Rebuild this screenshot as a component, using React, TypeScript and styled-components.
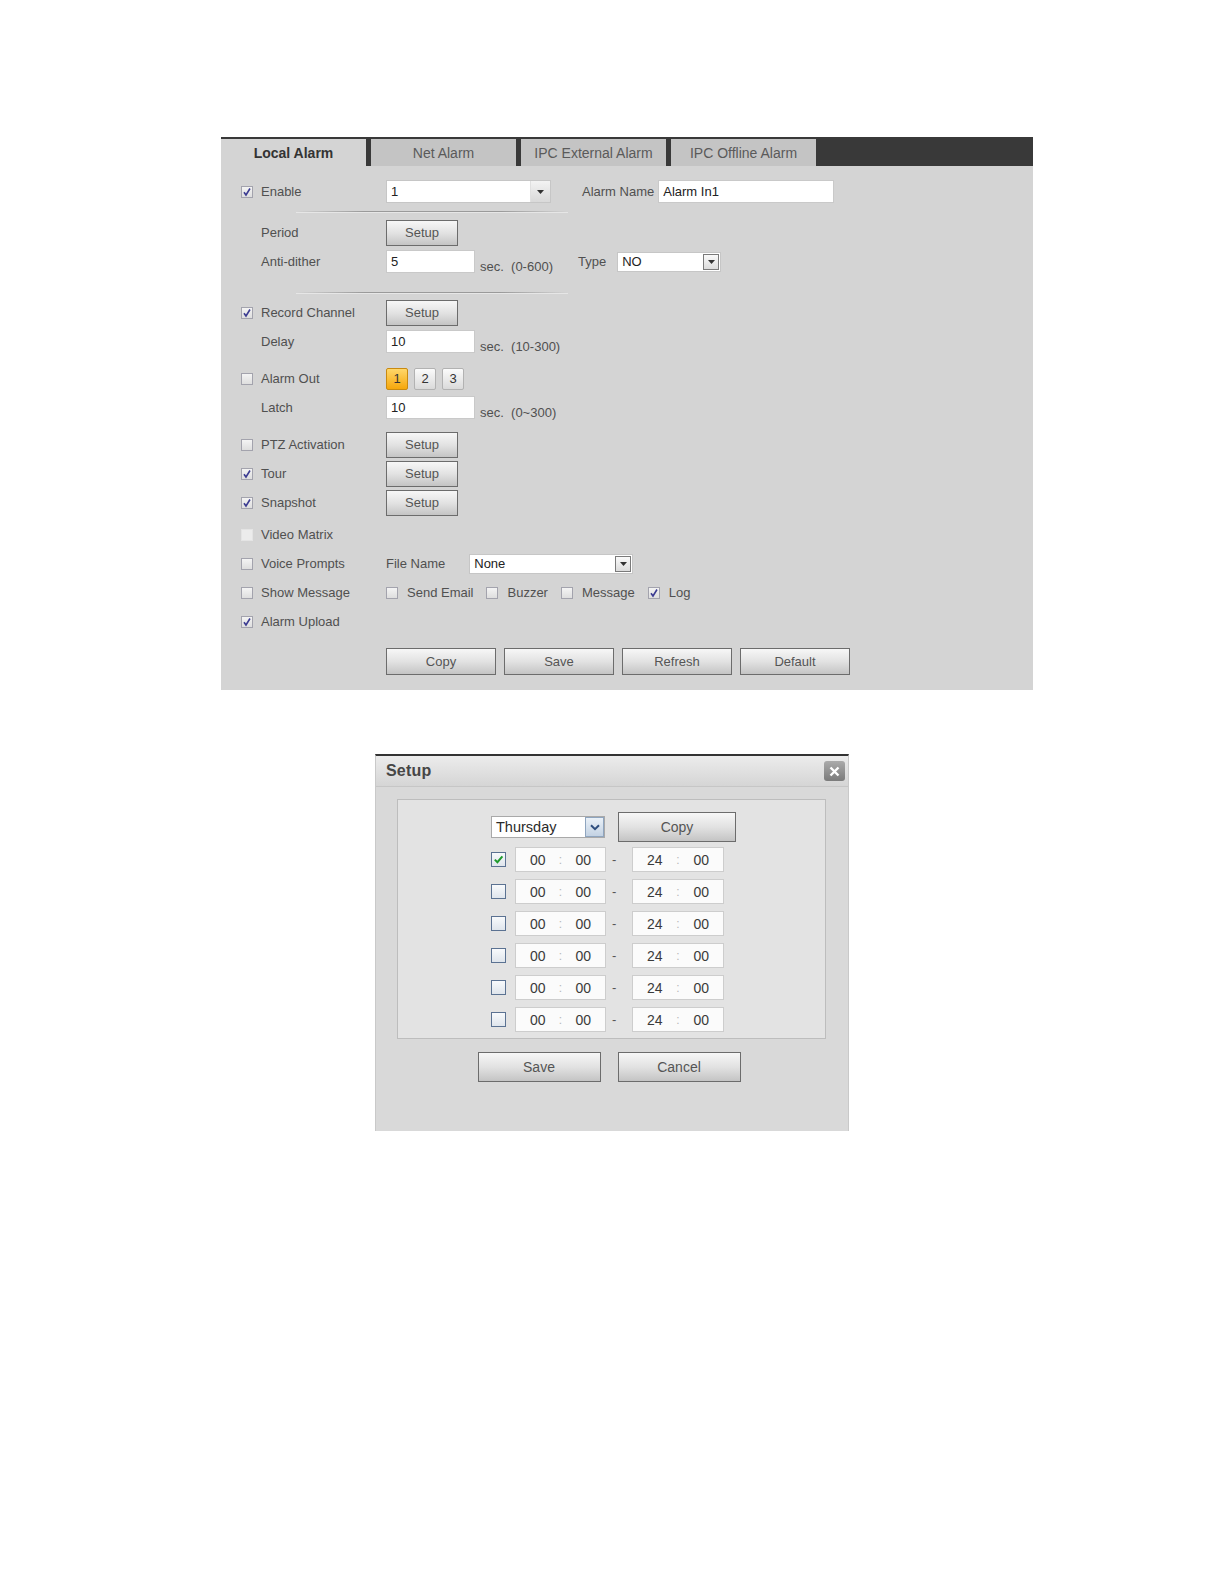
import React from "react";
import styled, { createGlobalStyle } from "styled-components";

const GlobalStyle = createGlobalStyle`
  html, body { margin: 0; padding: 0; background: #ffffff; }
  body { font-family: "Liberation Sans", Arial, sans-serif; }
  *, *::before, *::after { box-sizing: border-box; }
`;

const Page = styled.div`
  width: 1224px;
  min-height: 1584px;
  padding-top: 137px;
  background: #ffffff;
`;

/* ---------- main panel ---------- */

const Panel = styled.section`
  margin-left: 221px;
  width: 812px;
  background: #d4d4d4;
  padding-bottom: 15px;
`;

const TabBar = styled.div`
  display: flex;
  gap: 5px;
  height: 29px;
  padding-top: 2px;
  background: #393939;
`;

const Tab = styled.div<{ $active?: boolean }>`
  width: 145px;
  height: 27px;
  display: flex;
  align-items: center;
  justify-content: center;
  font-size: 14px;
  background: ${(p) => (p.$active ? "#d4d4d4" : "#c4c4c4")};
  color: ${(p) => (p.$active ? "#333333" : "#5a5a5a")};
  font-weight: ${(p) => (p.$active ? 700 : 400)};
`;

const Form = styled.div`
  display: flex;
  flex-direction: column;
  padding: 11px 0 0 20px;
`;

const Row = styled.div<{ $mt?: number }>`
  display: flex;
  align-items: center;
  height: 29px;
  margin-top: ${(p) => p.$mt ?? 0}px;
`;

const LabelCell = styled.div<{ $indent?: boolean }>`
  width: 145px;
  flex: none;
  display: flex;
  align-items: center;
  gap: 8px;
  padding-left: ${(p) => (p.$indent ? 20 : 0)}px;
  font-size: 13px;
  color: #505050;
  white-space: nowrap;
`;

const Text = styled.span<{ $ml?: number }>`
  font-size: 13px;
  color: #505050;
  white-space: nowrap;
  margin-left: ${(p) => p.$ml ?? 0}px;
`;

const Unit = styled.span`
  font-size: 13px;
  color: #505050;
  white-space: pre;
  margin-left: 5px;
  margin-top: 9px;
`;

const Divider = styled.div<{ $top: number; $bottom: number }>`
  margin: ${(p) => p.$top}px 0 ${(p) => p.$bottom}px 55px;
  width: 272px;
  height: 1px;
  background: linear-gradient(to right, rgba(150,150,150,0), #9a9a9a 25%, #9a9a9a 75%, rgba(150,150,150,0));
  box-shadow: 0 1px 0 #e6e6e6;
`;

const Box = styled.span<{ $disabled?: boolean }>`
  width: 12px;
  height: 12px;
  flex: none;
  display: inline-flex;
  align-items: center;
  justify-content: center;
  border: 1px solid ${(p) => (p.$disabled ? "#e4e4e4" : "#a3a3ad")};
  background: ${(p) =>
    p.$disabled ? "#ececec" : "linear-gradient(#f4f4f4, #dedede)"};
`;

const Check = ({ checked, disabled }: { checked?: boolean; disabled?: boolean }) => (
  <Box $disabled={disabled}>
    {checked && (
      <svg width="10" height="10" viewBox="0 0 10 10">
        <path d="M2 5.2 L4 8 L8 1.5" stroke="#3c3c92" strokeWidth="1.6" fill="none" />
      </svg>
    )}
  </Box>
);

const TextInput = styled.input<{ $w: number; $ml?: number }>`
  width: ${(p) => p.$w}px;
  height: 23px;
  margin: 0 0 0 ${(p) => p.$ml ?? 0}px;
  padding: 0 4px;
  border: 1px solid #c9c9c9;
  background: #ffffff;
  font-family: "Liberation Sans", Arial, sans-serif;
  font-size: 13px;
  color: #222222;
  outline: none;
`;

const SelectBox = styled.div<{ $w: number; $h: number; $ml?: number }>`
  width: ${(p) => p.$w}px;
  height: ${(p) => p.$h}px;
  margin-left: ${(p) => p.$ml ?? 0}px;
  display: flex;
  align-items: stretch;
  border: 1px solid #c6c6c6;
  background: #ffffff;
  font-size: 13px;
  color: #222222;
`;

const SelectValue = styled.span`
  flex: 1;
  display: flex;
  align-items: center;
  padding-left: 4px;
`;

const FlatArrow = styled.span`
  width: 20px;
  display: flex;
  align-items: center;
  justify-content: center;
  border-left: 1px solid #e0e0e0;
  background: linear-gradient(#f3f3f3, #d9d9d9);
`;

const BoxArrow = styled.span`
  width: 16px;
  margin: 1px;
  display: flex;
  align-items: center;
  justify-content: center;
  border: 1px solid #7a7a7a;
  background: linear-gradient(#fafafa, #dcdcdc);
`;

const Tri = () => (
  <svg width="7" height="4" viewBox="0 0 7 4">
    <polygon points="0,0 7,0 3.5,4" fill="#333" />
  </svg>
);

const GrayButton = styled.button<{ $w: number; $h: number; $fs?: number }>`
  width: ${(p) => p.$w}px;
  height: ${(p) => p.$h}px;
  padding: 0;
  border: 1px solid #6c6c6c;
  background: linear-gradient(#f7f7f7, #e2e2e2 50%, #c4c4c4);
  font-family: "Liberation Sans", Arial, sans-serif;
  font-size: ${(p) => p.$fs ?? 13}px;
  color: #555555;
  cursor: pointer;
`;

const NumGroup = styled.div`
  display: flex;
  gap: 6px;
`;

const NumButton = styled.span<{ $on?: boolean }>`
  width: 22px;
  height: 22px;
  display: flex;
  align-items: center;
  justify-content: center;
  border-radius: 2px;
  font-size: 13px;
  color: #333333;
  border: 1px solid ${(p) => (p.$on ? "#c98a10" : "#b2b2b2")};
  background: ${(p) =>
    p.$on ? "linear-gradient(#ffd76a, #f5a70c)" : "linear-gradient(#fbfbfb, #dadada)"};
`;

const CheckGroup = styled.div`
  display: flex;
  align-items: center;
  gap: 13px;
`;

const CheckItem = styled.label`
  display: flex;
  align-items: center;
  gap: 9px;
  font-size: 13px;
  color: #505050;
  white-space: nowrap;
`;

const ButtonBar = styled.div`
  display: flex;
  gap: 8px;
  margin: 12px 0 0 145px;
`;

/* ---------- dialog ---------- */

const Dialog = styled.section`
  margin: 64px 0 0 375px;
  width: 474px;
  border-top: 2px solid #333333;
  border-left: 1px solid #c9c9c9;
  border-right: 1px solid #c9c9c9;
  background: #d9d9d9;
  padding-bottom: 49px;
`;

const DialogHeader = styled.header`
  height: 31px;
  display: flex;
  align-items: center;
  justify-content: space-between;
  padding: 0 3px 0 10px;
  background: linear-gradient(#ececec, #d5d5d5);
  border-bottom: 1px solid #c6c6c6;
`;

const DialogTitle = styled.span`
  font-size: 16px;
  font-weight: 700;
  color: #464646;
  letter-spacing: 0.2px;
`;

const CloseButton = styled.span`
  width: 21px;
  height: 20px;
  display: flex;
  align-items: center;
  justify-content: center;
  border-radius: 3px;
  background: linear-gradient(#ababab, #7b7b7b);
`;

const DialogBody = styled.div`
  padding: 12px 22px 0 21px;
`;

const InnerBox = styled.div`
  border: 1px solid #bdbdbd;
  background: #e3e3e3;
  padding: 12px 0 6px 93px;
  display: flex;
  flex-direction: column;
`;

const TopRow = styled.div`
  display: flex;
  align-items: center;
  gap: 13px;
  height: 30px;
  margin-bottom: 5px;
`;

const DaySelect = styled.div`
  width: 114px;
  height: 22px;
  display: flex;
  border: 1px solid #a9a9a9;
  background: #ffffff;
  font-size: 14.5px;
  color: #2a2a2a;
`;

const BlueArrow = styled.span`
  width: 19px;
  display: flex;
  align-items: center;
  justify-content: center;
  border: 1px solid #8fa5bf;
  background: linear-gradient(#eaf1f8, #c3d2e3);
`;

const TimeRows = styled.div`
  display: flex;
  flex-direction: column;
  gap: 7px;
`;

const TimeRow = styled.div`
  display: flex;
  align-items: center;
  height: 25px;
`;

const BlueBox = styled.span`
  width: 15px;
  height: 15px;
  flex: none;
  margin-right: 9px;
  display: flex;
  align-items: center;
  justify-content: center;
  border: 1px solid #5b7292;
  background: linear-gradient(#f8fafc, #dfe5ec);
`;

const TimeField = styled.div<{ $w: number }>`
  width: ${(p) => p.$w}px;
  height: 25px;
  display: flex;
  align-items: center;
  justify-content: space-between;
  padding: 0 14px;
  border: 1px solid #cdcdcd;
  background: #fbfbfb;
  font-size: 14px;
  color: #3a3a3a;
`;

const Colon = styled.span`
  color: #b8b8b8;
  font-size: 12px;
`;

const Dash = styled.span`
  width: 26px;
  padding-left: 6px;
  font-size: 13px;
  color: #555555;
`;

const DialogButtons = styled.div`
  display: flex;
  justify-content: center;
  gap: 17px;
  margin: 13px 6px 0 0;
`;

/* ---------- page ---------- */

const TimeLine = ({ checked }: { checked?: boolean }) => (
  <TimeRow>
    <BlueBox>
      {checked && (
        <svg width="11" height="11" viewBox="0 0 11 11">
          <path d="M1.8 5.6 L4.4 8.2 L9.4 2.4" stroke="#1f9a2d" strokeWidth="2" fill="none" />
        </svg>
      )}
    </BlueBox>
    <TimeField $w={91}>
      <span>00</span>
      <Colon>:</Colon>
      <span>00</span>
    </TimeField>
    <Dash>-</Dash>
    <TimeField $w={92}>
      <span>24</span>
      <Colon>:</Colon>
      <span>00</span>
    </TimeField>
  </TimeRow>
);

export default function App() {
  return (
    <Page>
      <GlobalStyle />
      <Panel>
        <TabBar>
          <Tab $active>Local Alarm</Tab>
          <Tab>Net Alarm</Tab>
          <Tab>IPC External Alarm</Tab>
          <Tab>IPC Offline Alarm</Tab>
        </TabBar>
        <Form>
          <Row>
            <LabelCell>
              <Check checked />
              Enable
            </LabelCell>
            <SelectBox $w={165} $h={23}>
              <SelectValue>1</SelectValue>
              <FlatArrow>
                <Tri />
              </FlatArrow>
            </SelectBox>
            <Text $ml={31}>Alarm Name</Text>
            <TextInput $w={176} $ml={4} readOnly value="Alarm In1" />
          </Row>
          <Divider $top={5} $bottom={6} />
          <Row>
            <LabelCell $indent>Period</LabelCell>
            <GrayButton $w={72} $h={26}>Setup</GrayButton>
          </Row>
          <Row>
            <LabelCell $indent>Anti-dither</LabelCell>
            <TextInput $w={89} readOnly value="5" />
            <Unit>{"sec.  (0-600)"}</Unit>
            <Text $ml={25}>Type</Text>
            <SelectBox $w={104} $h={20} $ml={11}>
              <SelectValue>NO</SelectValue>
              <BoxArrow>
                <Tri />
              </BoxArrow>
            </SelectBox>
          </Row>
          <Divider $top={16} $bottom={5} />
          <Row>
            <LabelCell>
              <Check checked />
              Record Channel
            </LabelCell>
            <GrayButton $w={72} $h={26}>Setup</GrayButton>
          </Row>
          <Row>
            <LabelCell $indent>Delay</LabelCell>
            <TextInput $w={89} readOnly value="10" />
            <Unit>{"sec.  (10-300)"}</Unit>
          </Row>
          <Row $mt={8}>
            <LabelCell>
              <Check />
              Alarm Out
            </LabelCell>
            <NumGroup>
              <NumButton $on>1</NumButton>
              <NumButton>2</NumButton>
              <NumButton>3</NumButton>
            </NumGroup>
          </Row>
          <Row>
            <LabelCell $indent>Latch</LabelCell>
            <TextInput $w={89} readOnly value="10" />
            <Unit>{"sec.  (0~300)"}</Unit>
          </Row>
          <Row $mt={8}>
            <LabelCell>
              <Check />
              PTZ Activation
            </LabelCell>
            <GrayButton $w={72} $h={26}>Setup</GrayButton>
          </Row>
          <Row>
            <LabelCell>
              <Check checked />
              Tour
            </LabelCell>
            <GrayButton $w={72} $h={26}>Setup</GrayButton>
          </Row>
          <Row>
            <LabelCell>
              <Check checked />
              Snapshot
            </LabelCell>
            <GrayButton $w={72} $h={26}>Setup</GrayButton>
          </Row>
          <Row $mt={3}>
            <LabelCell>
              <Check disabled />
              Video Matrix
            </LabelCell>
          </Row>
          <Row>
            <LabelCell>
              <Check />
              Voice Prompts
            </LabelCell>
            <Text>File Name</Text>
            <SelectBox $w={164} $h={20} $ml={24}>
              <SelectValue>None</SelectValue>
              <BoxArrow>
                <Tri />
              </BoxArrow>
            </SelectBox>
          </Row>
          <Row>
            <LabelCell>
              <Check />
              Show Message
            </LabelCell>
            <CheckGroup>
              <CheckItem>
                <Check />
                Send Email
              </CheckItem>
              <CheckItem>
                <Check />
                Buzzer
              </CheckItem>
              <CheckItem>
                <Check />
                Message
              </CheckItem>
              <CheckItem>
                <Check checked />
                Log
              </CheckItem>
            </CheckGroup>
          </Row>
          <Row>
            <LabelCell>
              <Check checked />
              Alarm Upload
            </LabelCell>
          </Row>
          <ButtonBar>
            <GrayButton $w={110} $h={27}>Copy</GrayButton>
            <GrayButton $w={110} $h={27}>Save</GrayButton>
            <GrayButton $w={110} $h={27}>Refresh</GrayButton>
            <GrayButton $w={110} $h={27}>Default</GrayButton>
          </ButtonBar>
        </Form>
      </Panel>

      <Dialog>
        <DialogHeader>
          <DialogTitle>Setup</DialogTitle>
          <CloseButton>
            <svg width="11" height="11" viewBox="0 0 11 11">
              <path d="M1.5 1.5 L9.5 9.5 M9.5 1.5 L1.5 9.5" stroke="#ffffff" strokeWidth="2.4" />
            </svg>
          </CloseButton>
        </DialogHeader>
        <DialogBody>
          <InnerBox>
            <TopRow>
              <DaySelect>
                <SelectValue>Thursday</SelectValue>
                <BlueArrow>
                  <svg width="10" height="7" viewBox="0 0 10 7">
                    <path d="M1 1.2 L5 5.2 L9 1.2" stroke="#2e4e7e" strokeWidth="2" fill="none" />
                  </svg>
                </BlueArrow>
              </DaySelect>
              <GrayButton $w={118} $h={30} $fs={14}>Copy</GrayButton>
            </TopRow>
            <TimeRows>
              <TimeLine checked />
              <TimeLine />
              <TimeLine />
              <TimeLine />
              <TimeLine />
              <TimeLine />
            </TimeRows>
          </InnerBox>
        </DialogBody>
        <DialogButtons>
          <GrayButton $w={123} $h={30} $fs={14}>Save</GrayButton>
          <GrayButton $w={123} $h={30} $fs={14}>Cancel</GrayButton>
        </DialogButtons>
      </Dialog>
    </Page>
  );
}
